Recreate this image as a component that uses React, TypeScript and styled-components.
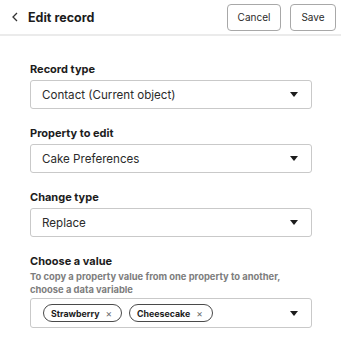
import React from 'react'
import styled, { createGlobalStyle } from 'styled-components'

const GlobalStyle = createGlobalStyle`
  html, body {
    margin: 0;
    padding: 0;
    background: #ffffff;
  }
  body {
    font-family: Inter, "Noto Sans", sans-serif;
    color: #1f2a37;
  }
`

const Page = styled.div`
  width: 341px;
  height: 355px;
  overflow: hidden;
`

const Header = styled.header`
  height: 34px;
  display: flex;
  align-items: center;
  padding: 0 5px 0 12px;
  border-bottom: 2px solid #ebebeb;
`

const BackButton = styled.button`
  border: none;
  background: none;
  padding: 0;
  width: 8px;
  height: 14px;
  display: flex;
  align-items: center;
  cursor: pointer;
`

const Title = styled.h1`
  margin: 0 0 0 8px;
  font-size: 12.5px;
  font-weight: 700;
  color: #1c1c1c;
  flex: 1;
`

const Actions = styled.div`
  display: flex;
  gap: 9px;
`

const OutlineButton = styled.button<{ $w: number }>`
  width: ${p => p.$w}px;
  height: 27px;
  border: 1px solid #a8a8a8;
  border-radius: 4px;
  background: #ffffff;
  font-family: inherit;
  font-size: 10px;
  color: #2b2b2b;
  padding: 0;
  cursor: pointer;
`

const Form = styled.div`
  padding: 25px 29px 0 30px;
  display: flex;
  flex-direction: column;
  gap: 16px;
`

const Field = styled.div`
  display: flex;
  flex-direction: column;
`

const Label = styled.label`
  font-size: 11px;
  line-height: 16px;
  font-weight: 700;
  color: #1c1c1c;
  margin-bottom: 3px;
`

const Help = styled.p`
  margin: -2px 0 2px;
  font-size: 9.4px;
  line-height: 13px;
  font-weight: 700;
  color: #7d7d7d;
`

const SelectBox = styled.div<{ $h?: number }>`
  height: ${p => p.$h ?? 29}px;
  box-sizing: border-box;
  border: 1px solid #c9c9c9;
  border-radius: 3px;
  display: flex;
  align-items: center;
  padding: 0 13px 0 11px;
  gap: 6px;
`

const Value = styled.span`
  flex: 1;
  font-size: 11.6px;
  color: #2b2b2b;
`

const Chips = styled.div`
  flex: 1;
  display: flex;
  gap: 7px;
  padding-left: 1px;
`

const Chip = styled.span`
  height: 18px;
  box-sizing: border-box;
  border: 1px solid #4a4a4a;
  border-radius: 9px;
  display: inline-flex;
  align-items: center;
  gap: 6px;
  padding: 0 9px 0 7px;
  font-size: 8.8px;
  font-weight: 700;
  color: #1c1c1c;
`

const ChipClose = styled.span`
  font-size: 10px;
  font-weight: 400;
  color: #6b6b6b;
  line-height: 1;
`

const Caret = () => (
  <svg width="8" height="5" viewBox="0 0 8 5">
    <path d="M0 0h8L4 5z" fill="#1c1c1c" />
  </svg>
)

const Chevron = () => (
  <svg width="6" height="10" viewBox="0 0 6 10">
    <path d="M5 1L1 5l4 4" fill="none" stroke="#333" strokeWidth="1.3" />
  </svg>
)

const fields = [
  { label: 'Record type', value: 'Contact (Current object)' },
  { label: 'Property to edit', value: 'Cake Preferences' },
  { label: 'Change type', value: 'Replace' },
]

export default function App() {
  return (
    <Page>
      <GlobalStyle />
      <Header>
        <BackButton>
          <Chevron />
        </BackButton>
        <Title>Edit record</Title>
        <Actions>
          <OutlineButton $w={54}>Cancel</OutlineButton>
          <OutlineButton $w={46}>Save</OutlineButton>
        </Actions>
      </Header>

      <Form>
        {fields.map(f => (
          <Field key={f.label}>
            <Label>{f.label}</Label>
            <SelectBox>
              <Value>{f.value}</Value>
              <Caret />
            </SelectBox>
          </Field>
        ))}

        <Field>
          <Label>Choose a value</Label>
          <Help>
            To copy a property value from one property to another,
            <br />
            choose a data variable
          </Help>
          <SelectBox $h={30}>
            <Chips>
              <Chip>
                Strawberry <ChipClose>×</ChipClose>
              </Chip>
              <Chip>
                Cheesecake <ChipClose>×</ChipClose>
              </Chip>
            </Chips>
            <Caret />
          </SelectBox>
        </Field>
      </Form>
    </Page>
  )
}
